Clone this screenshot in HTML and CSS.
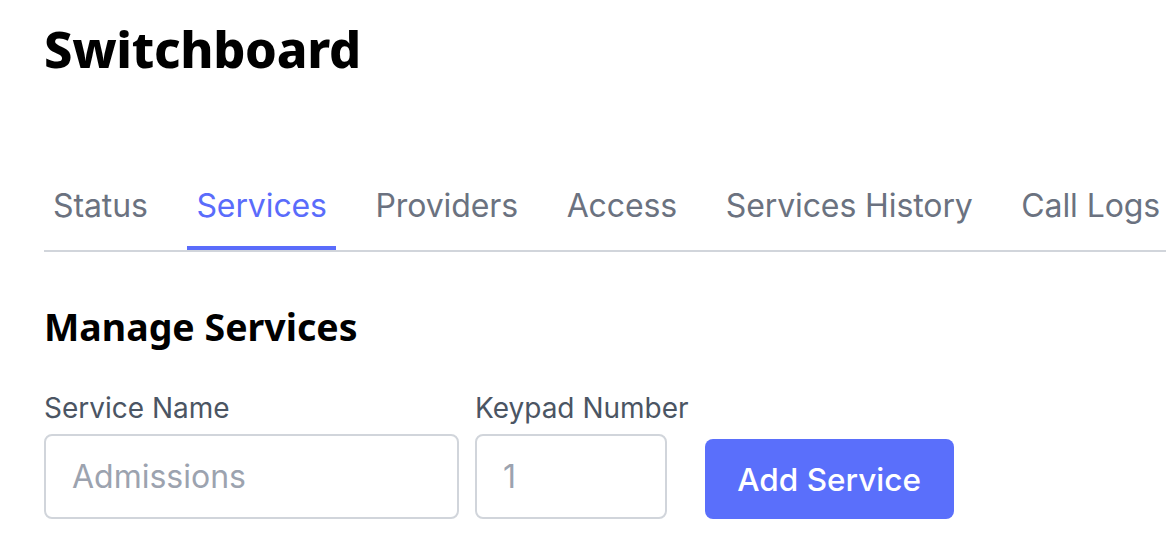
FILE: index.html
```html
<!DOCTYPE html>
<html lang="en">
<head>
<meta charset="utf-8">
<title>Switchboard</title>
<link rel="stylesheet" href="styles.css">
</head>
<body>
<main class="page">
  <h1 class="title">Switchboard</h1>
  <nav class="tabs">
    <a class="tab">Status</a>
    <a class="tab tab-active">Services</a>
    <a class="tab">Providers</a>
    <a class="tab">Access</a>
    <a class="tab">Services History</a>
    <a class="tab">Call Logs</a>
  </nav>
  <section class="section">
    <h2 class="section-title">Manage Services</h2>
    <form class="form">
      <label class="field">
        <span class="label">Service Name</span>
        <input class="input input-name" type="text" placeholder="Admissions">
      </label>
      <label class="field">
        <span class="label">Keypad Number</span>
        <input class="input input-key" type="text" placeholder="1">
      </label>
      <button class="btn" type="button">Add Service</button>
    </form>
  </section>
</main>
</body>
</html>
```

FILE: styles.css
```css
* { box-sizing: border-box; }
html, body { margin: 0; padding: 0; background: #fff; }
body { font-family: Inter, "Noto Sans", sans-serif; overflow: hidden; }
.page { padding-left: 44px; width: 1200px; }
.title {
  font-family: "Noto Sans", "DejaVu Sans", sans-serif;
  font-weight: 800;
  font-size: 50.5px;
  line-height: 64px;
  margin: 17px 0 0 0;
  color: #000;
  letter-spacing: -0.3px;
}
.tabs {
  display: flex;
  gap: 30.6px;
  margin-top: 105px;
  border-bottom: 2px solid #d1d5db;
}
.tab {
  font-size: 32px;
  line-height: 40px;
  color: #6b7280;
  padding: 0 9px 20px;
  border-bottom: 4px solid transparent;
  white-space: nowrap;
  letter-spacing: -0.1px;
}
.tab-active { color: #5a6cfb; border-bottom-color: #5a6cfb; }
.section { padding-top: 53px; }
.section-title {
  font-family: "Noto Sans", "DejaVu Sans", sans-serif;
  font-weight: 700;
  font-size: 37.5px;
  line-height: 44px;
  margin: 0;
  color: #000;
}
.form { display: flex; align-items: flex-end; gap: 16px; margin-top: 43px; }
.field { display: flex; flex-direction: column; gap: 10px; }
.label { font-size: 28px; line-height: 32px; color: #4b5563; }
.input {
  height: 85px;
  border: 2px solid #d1d5db;
  border-radius: 8px;
  padding: 0 26px;
  font-family: Inter, sans-serif;
  font-size: 32px;
  color: #111827;
  background: #fff;
}
.input::placeholder { color: #9ca3af; }
.input-name { width: 415px; }
.input-key { width: 192px; }
.btn {
  width: 249px;
  height: 80px;
  border: 0;
  border-radius: 8px;
  background: #5a6ffb;
  color: #fff;
  font-family: Inter, sans-serif;
  font-weight: 500;
  font-size: 31.5px;
}
```
